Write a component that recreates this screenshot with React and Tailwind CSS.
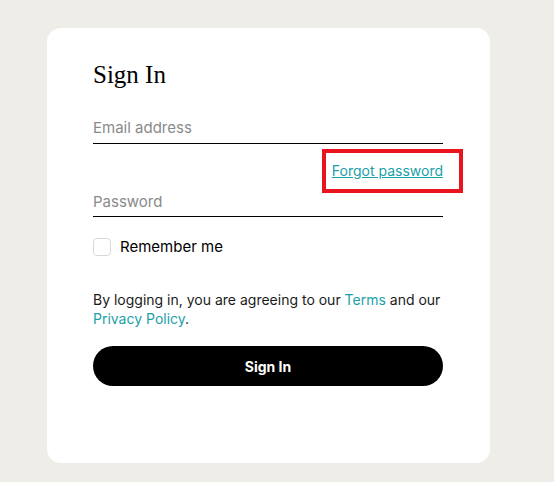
export default function App() {
  return (
    <div className="min-h-[482px] w-full bg-[#eeede8] pt-[28px] pl-[47px] font-['Inter',sans-serif]">
      <div className="w-[443px] h-[435px] bg-white rounded-[14px] pl-[46px] pr-[47px] pt-[32px]">
        <h1 className="font-['Liberation_Serif',serif] text-[25px] leading-[30px] text-black">Sign In</h1>

        <div className="mt-[25px] border-b border-black pb-[4px]">
          <input
            type="email"
            placeholder="Email address"
            className="w-full outline-none text-[15px] leading-[22px] placeholder:text-[#8a8a8a]"
          />
        </div>

        <div className="flex justify-end mt-[14px]">
          <div className="relative">
            <a href="#" className="text-[14px] leading-[20px] text-[#1aa0a8] underline">Forgot password</a>
            <div className="absolute -left-[10px] -right-[20px] -top-[9px] -bottom-[11px] border-4 border-[#e8141e]" />
          </div>
        </div>

        <div className="mt-[7px] border-b border-black pb-[3px]">
          <input
            type="password"
            placeholder="Password"
            className="w-full outline-none text-[15px] leading-[22px] placeholder:text-[#8a8a8a]"
          />
        </div>

        <label className="flex items-center gap-[9px] mt-[20px]">
          <span className="w-[18px] h-[18px] rounded-[4px] border border-[#d8d8d8] bg-white" />
          <span className="text-[15px] leading-[20px] text-black">Remember me</span>
        </label>

        <p className="mt-[33px] text-[14px] leading-[19px] text-[#1a1a1a]">
          By logging in, you are agreeing to our <a href="#" className="text-[#1aa0a8]">Terms</a> and our{" "}
          <a href="#" className="text-[#1aa0a8]">Privacy Policy</a>.
        </p>

        <button className="mt-[18px] w-full h-[40px] rounded-full bg-black text-white text-[14px] font-bold">
          Sign In
        </button>
      </div>
    </div>
  );
}
